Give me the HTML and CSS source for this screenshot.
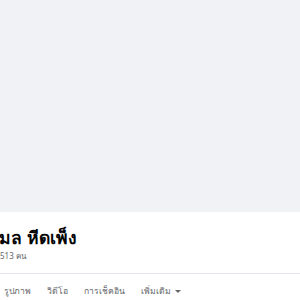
FILE: index.html
```html
<!DOCTYPE html>
<html lang="th">
<head>
  <meta charset="UTF-8">
  <meta name="viewport" content="width=device-width, initial-scale=1.0">
  <title>โปรไฟล์</title>
  <link rel="stylesheet" href="styles.css">
</head>
<body>

  <div class="cover"></div>

  <section class="profile">
    <h1 class="name">มล หีดเพ็ง</h1>
    <p class="friends">513 คน</p>
  </section>

  <nav class="tabs">
    <a href="#">รูปภาพ</a>
    <a href="#">วิดีโอ</a>
    <a href="#">การเช็คอิน</a>
    <a href="#">เพิ่มเติม <span class="caret"></span></a>
  </nav>

</body>
</html>
```

FILE: styles.css
```css
* {
  margin: 0;
  padding: 0;
  box-sizing: border-box;
}

body {
  font-family: "Noto Sans", "Liberation Sans", sans-serif;
  background-color: #ffffff;
  overflow: hidden;
}

.cover {
  height: 212px;
  background-color: #f0f2f5;
}

.profile {
  padding: 13px 0 0 0;
  height: 62px;
  border-bottom: 1px solid #e4e6eb;
}

.name {
  font-size: 17.5px;
  font-weight: bold;
  color: #050505;
  line-height: 24px;
  margin-left: -1px;
}

.friends {
  font-size: 8px;
  color: #65676b;
  line-height: 12px;
  margin-top: 1px;
}

.tabs {
  display: flex;
  gap: 16px;
  padding: 10px 0 0 4px;
}

.tabs a {
  font-size: 8.6px;
  color: #65676b;
  text-decoration: none;
  display: flex;
  align-items: center;
  gap: 4px;
}

.caret {
  width: 0;
  height: 0;
  border-left: 3px solid transparent;
  border-right: 3px solid transparent;
  border-top: 3.5px solid #65676b;
}
```
